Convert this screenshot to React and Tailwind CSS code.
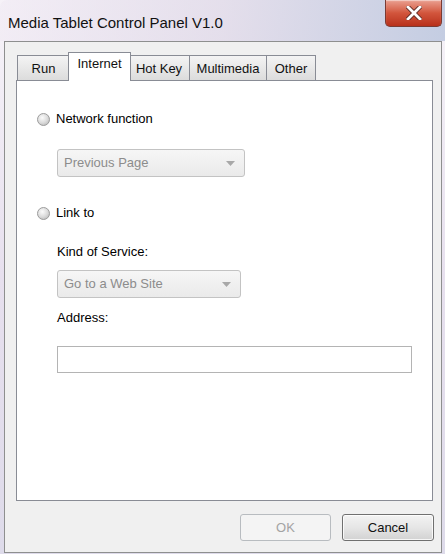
import React, { useState } from 'react';

const font = { fontFamily: '"Liberation Sans", Arial, sans-serif' };

function Radio() {
  return (
    <svg width="13" height="13" viewBox="0 0 13 13" className="shrink-0">
      <defs>
        <radialGradient id="rg" cx="40%" cy="35%" r="70%">
          <stop offset="0%" stopColor="#fbfbfb" />
          <stop offset="60%" stopColor="#dcdcdc" />
          <stop offset="100%" stopColor="#bdbdbd" />
        </radialGradient>
      </defs>
      <circle cx="6.5" cy="6.5" r="6" fill="url(#rg)" stroke="#9c9c9c" strokeWidth="1" />
    </svg>
  );
}

function Select({ label, width }) {
  return (
    <div
      className={`${width} h-[28px] flex items-center justify-between rounded-[3px] border border-[#c3c3c3] bg-gradient-to-b from-[#f6f6f6] to-[#eaeaea] pl-[6px] pr-[9px] text-[13px] text-[#8c8c8c]`}
    >
      <span>{label}</span>
      <svg width="9" height="5" viewBox="0 0 9 5">
        <path d="M0 0 L9 0 L4.5 5 Z" fill="#a8a8a8" />
      </svg>
    </div>
  );
}

const tabs = [
  { name: 'Run', w: 'w-[53px]' },
  { name: 'Internet', w: 'w-[63px]' },
  { name: 'Hot Key', w: 'w-[62px]' },
  { name: 'Multimedia', w: 'w-[78px]' },
  { name: 'Other', w: 'w-[50px]' },
];

export default function App() {
  const [active, setActive] = useState('Internet');

  return (
    <div className="w-[445px] h-[554px] overflow-hidden bg-white text-black" style={font}>
      <div className="h-full flex flex-col rounded-t-[7px] bg-gradient-to-b from-[#f7f4f9] via-[#e7e0ee] to-[#dedbea]">
        {/* title bar */}
        <div className="h-[41px] flex items-start bg-gradient-to-r from-[#f0e9f3]/60 via-[#ddd6e6]/70 to-[#c4cde2]">
          <div className="pl-[8px] pt-[13px] text-[15px] leading-[20px] text-[#111]">
            Media Tablet Control Panel V1.0
          </div>
          <div className="ml-auto mr-[3px] w-[57px] h-[27px] flex items-center justify-center rounded-b-[5px] border border-t-0 border-[#7a3b33] bg-gradient-to-b from-[#e9a091] via-[#d2553c] to-[#b8301a] shadow-[inset_0_1px_1px_rgba(255,255,255,0.5)]">
            <svg width="16" height="14" viewBox="0 0 16 14">
              <path d="M2 1 L14 13 M14 1 L2 13" stroke="#5a2a24" strokeWidth="4.5" strokeLinecap="square" />
              <path d="M2 1 L14 13 M14 1 L2 13" stroke="#ffffff" strokeWidth="2.8" strokeLinecap="square" />
            </svg>
          </div>
        </div>

        {/* client area */}
        <div className="ml-[4px] mr-[3px] h-[512px] flex flex-col border border-[#8e8f8f] bg-[#f0f0f0] pl-[11px] pr-[7px]">
          {/* tabs */}
          <div className="mt-[10px] flex items-end pl-[1px] h-[28px]">
            {tabs.map(t => {
              const isActive = t.name === active;
              return (
                <div
                  key={t.name}
                  onClick={() => setActive(t.name)}
                  className={
                    isActive
                      ? `relative z-10 -mx-[2px] -mb-px h-[29px] ${t.w} border border-b-0 border-[#898c95] bg-white pt-[3px] text-[13px] leading-[16px] text-center text-[#111] cursor-default`
                      : `h-[25px] ${t.w} border border-b-0 border-[#898c95] -ml-px first:ml-0 bg-gradient-to-b from-[#f4f4f4] to-[#dcdcdc] pt-[5px] text-[13px] leading-[16px] text-center text-[#111] cursor-default`
                  }
                >
                  {t.name}
                </div>
              );
            })}
          </div>

          {/* tab panel */}
          <div className="w-[417px] h-[421px] flex flex-col border border-[#898c95] bg-white pl-[40px]">
            <label className="mt-[30px] -ml-[20px] h-[16px] flex items-center gap-[6px] text-[13px] leading-[16px]">
              <Radio />
              <span>Network function</span>
            </label>
            <div className="mt-[22px]">
              <Select label="Previous Page" width="w-[188px]" />
            </div>

            <label className="mt-[28px] -ml-[20px] h-[16px] flex items-center gap-[6px] text-[13px] leading-[16px]">
              <Radio />
              <span>Link to</span>
            </label>

            <div className="mt-[23px] h-[16px] text-[13px] leading-[16px]">Kind of Service:</div>
            <div className="mt-[10px]">
              <Select label="Go to a Web Site" width="w-[184px]" />
            </div>

            <div className="mt-[12px] h-[16px] text-[13px] leading-[16px]">Address:</div>
            <input
              type="text"
              className="mt-[20px] w-[355px] h-[27px] border border-[#b4b4b4] bg-white outline-none"
            />
          </div>

          {/* buttons */}
          <div className="mt-[13px] flex justify-end gap-[11px]">
            <button
              disabled
              className="w-[91px] h-[27px] rounded-[3px] border border-[#b8bcc0] bg-[#f4f4f4] text-[13px] text-[#a3a3a3]"
            >
              OK
            </button>
            <button className="w-[92px] h-[27px] rounded-[3px] border border-[#707070] bg-gradient-to-b from-[#f3f3f3] via-[#e6e6e6] to-[#d2d2d2] text-[13px] text-[#111] shadow-[inset_0_0_0_1px_rgba(255,255,255,0.8)]">
              Cancel
            </button>
          </div>
        </div>
      </div>
    </div>
  );
}
